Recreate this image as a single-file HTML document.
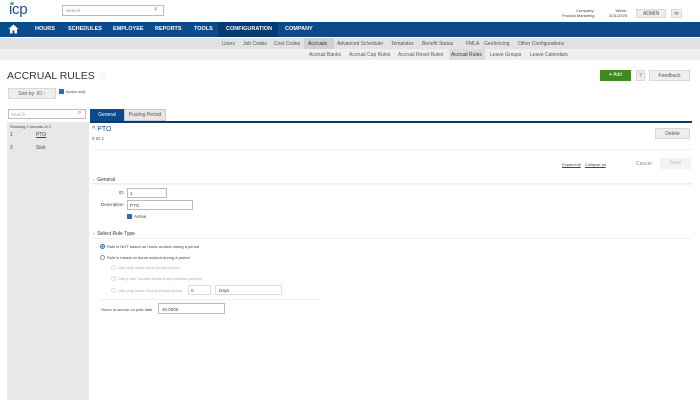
<!DOCTYPE html>
<html><head><style>
*{margin:0;padding:0;box-sizing:border-box}
body{width:700px;height:400px;position:relative;background:#fff;font-family:"Liberation Sans",sans-serif;overflow:hidden;color:#333}
.a{position:absolute;white-space:nowrap}
.nav{top:22px;left:0;width:700px;height:15px;background:#0b4a8b}
.nav span{position:absolute;top:4px;font-size:5.5px;font-weight:bold;color:#fff}
.s1{top:38px;left:0;width:700px;height:11px;background:#e2e2e2}
.s2{top:49px;left:0;width:700px;height:11px;background:#efefef}
.t{font-size:5px;color:#555}
.box{border:1px solid #bbb;background:#fff}
.btn{background:#eee;border:1px solid #d8d8d8;font-size:5px;color:#555;text-align:center}
.f{font-size:4.5px;color:#444}
.g{font-size:4.5px;color:#aaa}
.rad{width:5px;height:5px;border:1px solid #999;border-radius:50%;background:#fff}
</style></head><body>
<div class="a" style="left:9px;top:1px;font-size:15px;color:#1b4f8f;letter-spacing:-0.3px">icp</div>
<div class="a" style="left:10px;top:2px;width:4px;height:3px;background:#6ab04c;border-radius:50%"></div>
<div class="a box" style="left:62px;top:5px;width:102px;height:11px"><span class="a t" style="left:3px;top:2px;color:#999;font-size:4.5px">Search</span><span class="a" style="left:91px;top:0px;font-size:7px;color:#777">⌕</span></div>
<div class="a f" style="left:562px;top:8px;text-align:right;font-size:4px;line-height:5px">Company:<br>Product Marketing</div>
<div class="a f" style="left:609px;top:8px;font-size:4px;line-height:5px;text-align:right">Week:<br>3/21/2025</div>
<div class="a btn" style="left:636px;top:9px;width:30px;height:9px;line-height:8px">ADMIN</div>
<div class="a btn" style="left:671px;top:9px;width:11px;height:9px;line-height:8px">✉</div>
<div class="a nav">
<svg class="a" style="left:8px;top:2px" width="11" height="10" viewBox="0 0 11 10"><path d="M5.5 0.5L0.5 5h1.5v4.5h2.5v-3h2v3h2.5V5h1.5z" fill="#fff"/></svg>
<span style="left:35px">HOURS</span><span style="left:68px">SCHEDULES</span><span style="left:113px">EMPLOYEE</span><span style="left:155px">REPORTS</span><span style="left:194px">TOOLS</span>
<div class="a" style="left:218px;top:0;width:60px;height:15px;background:#063a70"></div>
<span style="left:226px">CONFIGURATION</span><span style="left:285px">COMPANY</span></div>
<div class="a s1"></div><div class="a s2"></div>
<div class="a" style="left:304px;top:38px;width:30px;height:11px;background:#d0d0d0"></div>
<div class="a" style="left:449px;top:49px;width:36px;height:11px;background:#dcdcdc"></div>
<div class="a t" style="top:41px;left:222px">Users</div>
<div class="a t" style="top:41px;left:243px">Job Codes</div>
<div class="a t" style="top:41px;left:274px">Cost Codes</div>
<div class="a t" style="top:41px;left:308px;color:#333">Accruals</div>
<div class="a t" style="top:41px;left:337px">Advanced Scheduler</div>
<div class="a t" style="top:41px;left:391px">Templates</div>
<div class="a t" style="top:41px;left:422px">Benefit Status</div>
<div class="a t" style="top:41px;left:466px">FMLA</div>
<div class="a t" style="top:41px;left:484px">Geofencing</div>
<div class="a t" style="top:41px;left:518px">Other Configurations</div>
<div class="a t" style="top:52px;left:309px">Accrual Banks</div>
<div class="a t" style="top:52px;left:349px">Accrual Cap Rules</div>
<div class="a t" style="top:52px;left:398px">Accrual Reset Rules</div>
<div class="a t" style="top:52px;left:451px;color:#333">Accrual Rules</div>
<div class="a t" style="top:52px;left:490px">Leave Groups</div>
<div class="a t" style="top:52px;left:530px">Leave Calendars</div>
<div class="a" style="left:7px;top:70px;font-size:10.5px;color:#333">ACCRUAL RULES <span style="color:#ddd">☆</span></div>
<div class="a" style="left:600px;top:70px;width:31px;height:11px;background:#3f8a1f;color:#fff;font-size:5px;line-height:11px;text-align:center"><b>+</b> Add</div>
<div class="a btn" style="left:636px;top:70px;width:9px;height:11px;line-height:10px">?</div>
<div class="a btn" style="left:649px;top:70px;width:41px;height:11px;line-height:10px">Feedback</div>
<div class="a btn" style="left:8px;top:88px;width:48px;height:11px;line-height:10px">Sort by: ID ↑</div>
<div class="a" style="left:59px;top:89px;width:5px;height:5px;background:#2a6cc4"></div>
<div class="a f" style="left:66px;top:89px;font-size:4px">Active only</div>
<div class="a box" style="left:8px;top:109px;width:78px;height:10px"><span class="a g" style="left:2px;top:2px">Search</span><span class="a" style="left:69px;top:0;font-size:6px;color:#777">⌕</span></div>
<div class="a" style="left:90px;top:109px;width:34px;height:12px;background:#0b4a8b;color:#fff;font-size:5px;text-align:center;line-height:12px">General</div>
<div class="a" style="left:124px;top:109px;width:42px;height:12px;background:#e6e6e6;border:1px solid #ccc;font-size:5px;text-align:center;line-height:11px;color:#555">Posting Period</div>
<div class="a" style="left:90px;top:121px;width:602px;height:2px;background:#0b3a70"></div>
<div class="a" style="left:7px;top:122px;width:82px;height:278px;background:#e8e8e8"></div>
<div class="a f" style="left:10px;top:124px;font-size:4px">Showing 2 records of 2</div>
<div class="a f" style="left:10px;top:132px;font-size:5px">1</div><div class="a f" style="left:36px;top:132px;font-size:5px;text-decoration:underline">PTO</div>
<div class="a f" style="left:10px;top:145px;font-size:5px">2</div><div class="a f" style="left:36px;top:145px;font-size:5px">Sick</div>
<div class="a" style="left:92px;top:126px;font-size:7px;color:#1b4f8f">^ PTO</div>
<div class="a" style="left:92px;top:136px;font-size:5px;color:#1b4f8f">v <span style="color:#555;font-size:4.5px">ID 1</span></div>
<div class="a btn" style="left:655px;top:128px;width:35px;height:11px;line-height:10px">Delete</div>
<div class="a" style="left:92px;top:149px;width:600px;height:1px;background:#eee"></div>
<div class="a f" style="left:562px;top:162px;font-size:4px;text-decoration:underline">Expand all</div>
<div class="a f" style="left:585px;top:162px;font-size:4px;text-decoration:underline">Collapse all</div>
<div class="a g" style="left:636px;top:161px;font-size:5px;color:#888">Cancel</div>
<div class="a" style="left:660px;top:158px;width:31px;height:11px;background:#f3f3f3;font-size:5px;color:#bbb;text-align:center;line-height:11px">Save</div>
<div class="a" style="left:92px;top:183px;width:600px;height:1px;background:#eee"></div>
<div class="a f" style="left:93px;top:177px;font-size:5px;color:#333"><span style="color:#6a6;font-size:4px">▪</span>&nbsp; General</div>
<div class="a" style="left:92px;top:184px;width:600px;height:1px;background:#f2f2f2"></div>
<div class="a f" style="left:119px;top:190px">ID</div>
<div class="a box" style="left:127px;top:188px;width:40px;height:10px"><span class="a f" style="left:2px;top:2px">1</span></div>
<div class="a f" style="left:101px;top:202px">Description</div>
<div class="a box" style="left:127px;top:200px;width:66px;height:10px"><span class="a f" style="left:2px;top:2px">PTO</span></div>
<div class="a" style="left:127px;top:214px;width:5px;height:5px;background:#2a6cc4"></div>
<div class="a f" style="left:134px;top:214px">Active</div>
<div class="a f" style="left:93px;top:231px;font-size:5px;color:#333"><span style="color:#6a6;font-size:4px">▪</span>&nbsp; Select Rule Type</div>
<div class="a" style="left:92px;top:238px;width:600px;height:1px;background:#f2f2f2"></div>
<div class="a rad" style="left:100px;top:244px;border-color:#2a6cc4;background:radial-gradient(#2a6cc4 40%,#fff 50%)"></div>
<div class="a f" style="left:107px;top:244px;font-size:4px">Rule is NOT based on hours worked during a period</div>
<div class="a rad" style="left:100px;top:255px"></div>
<div class="a f" style="left:107px;top:255px;font-size:4px">Rule is based on hours worked during a period</div>
<div class="a rad" style="left:111px;top:265px;border-color:#ddd"></div><div class="a g" style="left:118px;top:265px;font-size:4px">Use only hours from current period</div>
<div class="a rad" style="left:111px;top:276px;border-color:#ddd"></div><div class="a g" style="left:118px;top:276px;font-size:4px">Carry over unused hours from previous periods</div>
<div class="a rad" style="left:111px;top:288px;border-color:#ddd"></div><div class="a g" style="left:118px;top:288px;font-size:4px">Use only hours from previous period</div>
<div class="a box" style="left:188px;top:285px;width:23px;height:10px;border-color:#ddd"><span class="a f" style="left:2px;top:2px">0</span></div>
<div class="a box" style="left:215px;top:285px;width:67px;height:10px;border-color:#ddd"><span class="a f" style="left:3px;top:2px">Days</span></div>
<div class="a" style="left:100px;top:299px;width:220px;height:1px;background:#eee"></div>
<div class="a f" style="left:101px;top:307px;font-size:4px">Hours to accrue on post date</div>
<div class="a box" style="left:158px;top:303px;width:67px;height:11px"><span class="a f" style="left:3px;top:3px">40.0000</span></div>
</body></html>
